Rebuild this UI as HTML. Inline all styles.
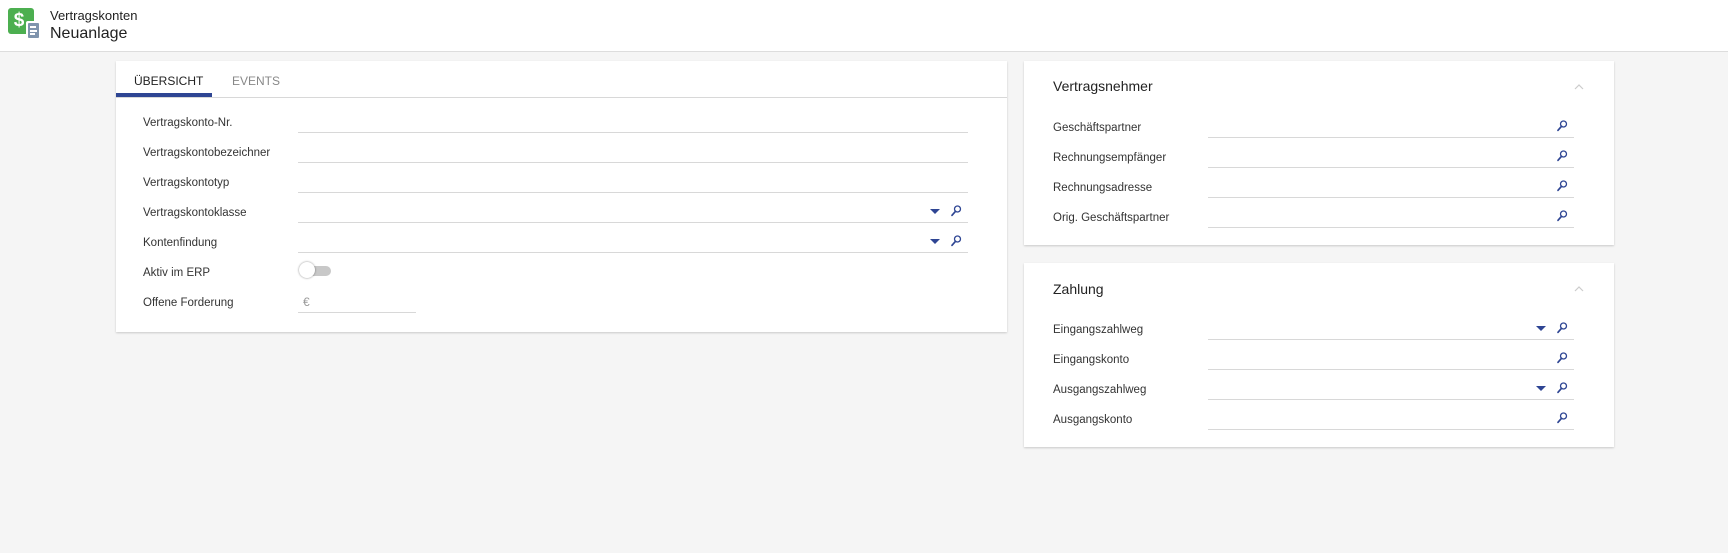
<!DOCTYPE html>
<html><head><meta charset="utf-8"><style>
*{box-sizing:border-box;margin:0;padding:0}
body{width:1728px;height:553px;background:#f5f5f5;font-family:"Liberation Sans",sans-serif;color:#333;position:relative;overflow:hidden}
.hdr{position:absolute;left:0;top:0;width:1728px;height:52px;background:#fff;border-bottom:1px solid #ddd}
.a{position:absolute;white-space:nowrap}
.card{position:absolute;background:#fff;box-shadow:0 1px 2px rgba(0,0,0,.18)}
.lbl{font-size:11.5px;color:#333}
.line{position:absolute;height:1px;background:#d8d8d8}
.car{position:absolute;width:0;height:0;border-left:5px solid transparent;border-right:5px solid transparent;border-top:5px solid #2e4593}
</style></head><body>
<div class="hdr">
<div class="a" style="left:8px;top:8px;width:26px;height:26px;background:#4caf50;border-radius:3px;color:#fff;font-weight:bold;font-size:19px;line-height:26px;text-align:center;padding-right:4px">$</div>
<div class="a" style="left:26px;top:21px;width:15px;height:19px;background:#fff;border-radius:2px"></div>
<div class="a" style="left:28px;top:23px;width:11px;height:15px;background:#7f94ad;border-radius:1px"></div>
<div class="a" style="left:30px;top:26px;width:6px;height:1.5px;background:#fff"></div>
<div class="a" style="left:30px;top:30px;width:7px;height:1.5px;background:#fff"></div>
<div class="a" style="left:30px;top:33px;width:5px;height:1.5px;background:#fff"></div>
<div class="a" style="left:50px;top:8px;font-size:13px;color:#222">Vertragskonten</div>
<div class="a" style="left:50px;top:25px;font-size:16px;color:#222">Neuanlage</div>
</div>

<div class="card" style="left:116px;top:61px;width:891px;height:271px">
<div class="a" style="left:18px;top:13px;font-size:12px;color:#222">ÜBERSICHT</div>
<div class="a" style="left:116px;top:13px;font-size:12px;color:#888">EVENTS</div>
<div class="a" style="left:0;top:32px;width:96px;height:4px;background:#2e4593"></div>
<div class="line" style="left:0;top:36px;width:891px"></div>
</div>

<div class="card" style="left:1024px;top:61px;width:590px;height:184px">
<div class="a" style="left:29px;top:17px;font-size:14px;color:#222">Vertragsnehmer</div>
</div>
<div class="card" style="left:1024px;top:263px;width:590px;height:184px">
<div class="a" style="left:29px;top:18px;font-size:14px;color:#222">Zahlung</div>
</div>
<svg class="a" style="left:0;top:0" width="1728" height="553">
<path d="M1575 89 L1579 85 L1583 89 M1575 291 L1579 287 L1583 291" fill="none" stroke="#ccc" stroke-width="1.2"/>
</svg>
<div id="rows"></div>
<script>
var h='';
function row(lx,y,t,x1,x2,dd,sr){
 h+='<div class="a lbl" style="left:'+lx+'px;top:'+(y-5)+'px">'+t+'</div>';
 h+='<div class="line" style="left:'+x1+'px;top:'+(y+10)+'px;width:'+(x2-x1)+'px"></div>';
 if(dd) h+='<div class="car" style="left:'+(sr-27)+'px;top:'+(y-3)+'px"></div>';
 if(sr) h+='<svg class="a" style="left:'+(sr-8)+'px;top:'+(y-8)+'px" width="14" height="14"><circle cx="8.5" cy="5" r="3" fill="none" stroke="#2e4593" stroke-width="1.3"/><path d="M6.5 7.3 L3 11.3" stroke="#2e4593" stroke-width="1.7" stroke-linecap="round"/></svg>';
}
row(143,122,'Vertragskonto-Nr.',298,968);
row(143,152,'Vertragskontobezeichner',298,968);
row(143,182,'Vertragskontotyp',298,968);
row(143,212,'Vertragskontoklasse',298,968,1,957);
row(143,242,'Kontenfindung',298,968,1,957);
h+='<div class="a lbl" style="left:143px;top:267px">Aktiv im ERP</div>';
h+='<div class="a" style="left:300px;top:266px;width:31px;height:10px;border-radius:5px;background:#c8c8c8"></div>';
h+='<div class="a" style="left:299px;top:262px;width:16px;height:16px;border-radius:50%;background:#fff;box-shadow:0 0 2px rgba(0,0,0,.45)"></div>';
h+='<div class="a lbl" style="left:143px;top:297px">Offene Forderung</div>';
h+='<div class="a" style="left:303px;top:295px;font-size:12px;color:#999">€</div>';
h+='<div class="line" style="left:298px;top:312px;width:118px"></div>';
var r1=['Geschäftspartner','Rechnungsempfänger','Rechnungsadresse','Orig. Geschäftspartner'];
r1.forEach(function(t,i){row(1053,127+30*i,t,1208,1574,0,1563);});
var r2=['Eingangszahlweg','Eingangskonto','Ausgangszahlweg','Ausgangskonto'];
r2.forEach(function(t,i){row(1053,329+30*i,t,1208,1574,i%2==0,1563);});
document.getElementById('rows').innerHTML=h;
</script>
</body></html>
